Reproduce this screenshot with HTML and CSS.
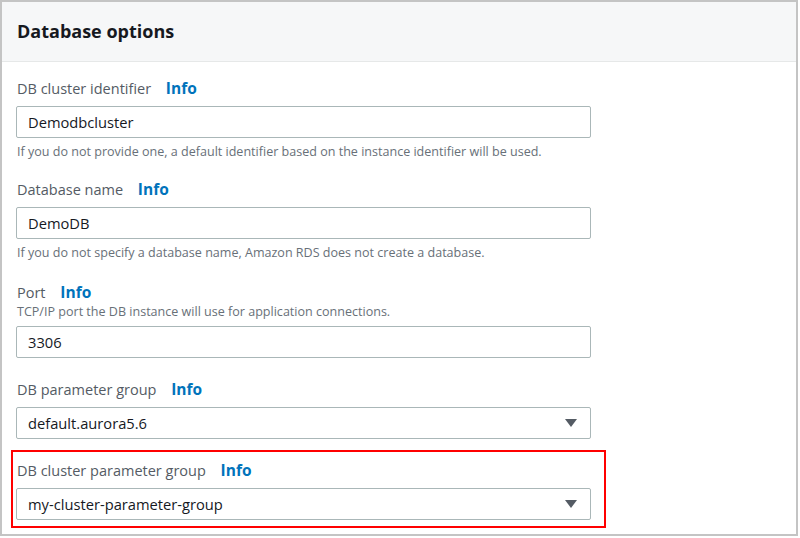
FILE: index.html
```html
<!DOCTYPE html>
<html>
<head>
<meta charset="utf-8">
<link rel="stylesheet" href="styles.css">
</head>
<body>
<div class="panel">
  <div class="panel-header"><h2 class="title">Database options</h2></div>
  <div class="panel-body">
    <div class="field f1">
      <div class="label">DB cluster identifier <span class="info">Info</span></div>
      <div class="control">Demodbcluster</div>
      <div class="hint">If you do not provide one, a default identifier based on the instance identifier will be used.</div>
    </div>
    <div class="field f2">
      <div class="label">Database name <span class="info">Info</span></div>
      <div class="control">DemoDB</div>
      <div class="hint">If you do not specify a database name, Amazon RDS does not create a database.</div>
    </div>
    <div class="field f3">
      <div class="label">Port <span class="info">Info</span></div>
      <div class="desc">TCP/IP port the DB instance will use for application connections.</div>
      <div class="control c-desc">3306</div>
    </div>
    <div class="field f4">
      <div class="label">DB parameter group <span class="info">Info</span></div>
      <div class="control select">default.aurora5.6<span class="arrow"></span></div>
    </div>
    <div class="highlight">
      <div class="label">DB cluster parameter group <span class="info">Info</span></div>
      <div class="control select">my-cluster-parameter-group<span class="arrow"></span></div>
    </div>
  </div>
</div>
</body>
</html>
```
FILE: styles.css
```css
html, body { margin: 0; padding: 0; background: #fff; }
body { font-family: "Open Sans", "Liberation Sans", sans-serif; color: #16191f; }
.panel {
  box-sizing: border-box;
  width: 798px;
  height: 536px;
  border: 2px solid #c4c4c4;
  background: #fff;
}
.panel-header {
  height: 59px;
  background: #f6f7f8;
  border-bottom: 1px solid #e6e8e8;
  display: flex;
  align-items: center;
  padding-left: 15px;
}
.title { margin: 0 0 2px 0; font-size: 18px; font-weight: 700; color: #16191f; line-height: 24px; }
.panel-body { padding: 17px 0 0 14px; }
.label { font-size: 14.5px; line-height: 20px; height: 20px; color: #545b64; padding-left: 1px; }
.info { color: #0073bb; font-weight: 700; font-size: 15.5px; line-height: 14px; margin-left: 11px; }
.control {
  box-sizing: border-box;
  width: 575px;
  height: 32px;
  margin-top: 7px;
  border: 1px solid #aab7b8;
  border-radius: 2px;
  padding-left: 11px;
  font-size: 14.7px;
  line-height: 30px;
  color: #16191f;
  position: relative;
}
.c-desc { margin-top: 6px; }
.hint { font-size: 12.55px; line-height: 16px; color: #687078; margin-top: 6px; padding-left: 1px; }
.desc { font-size: 12.55px; line-height: 16px; color: #687078; margin-top: 1px; padding-left: 1px; }
.f2 { margin-top: 20px; }
.f3 { margin-top: 22px; }
.f4 { margin-top: 22px; }
.arrow {
  position: absolute;
  right: 13px;
  top: 11px;
  width: 0; height: 0;
  border-left: 6px solid transparent;
  border-right: 6px solid transparent;
  border-top: 8px solid #545b64;
}
.highlight {
  box-sizing: border-box;
  width: 595px;
  margin: 11px 0 0 -5px;
  border: 2px solid #ff0000;
  padding: 9px 13px 6px 3px;
}
```
